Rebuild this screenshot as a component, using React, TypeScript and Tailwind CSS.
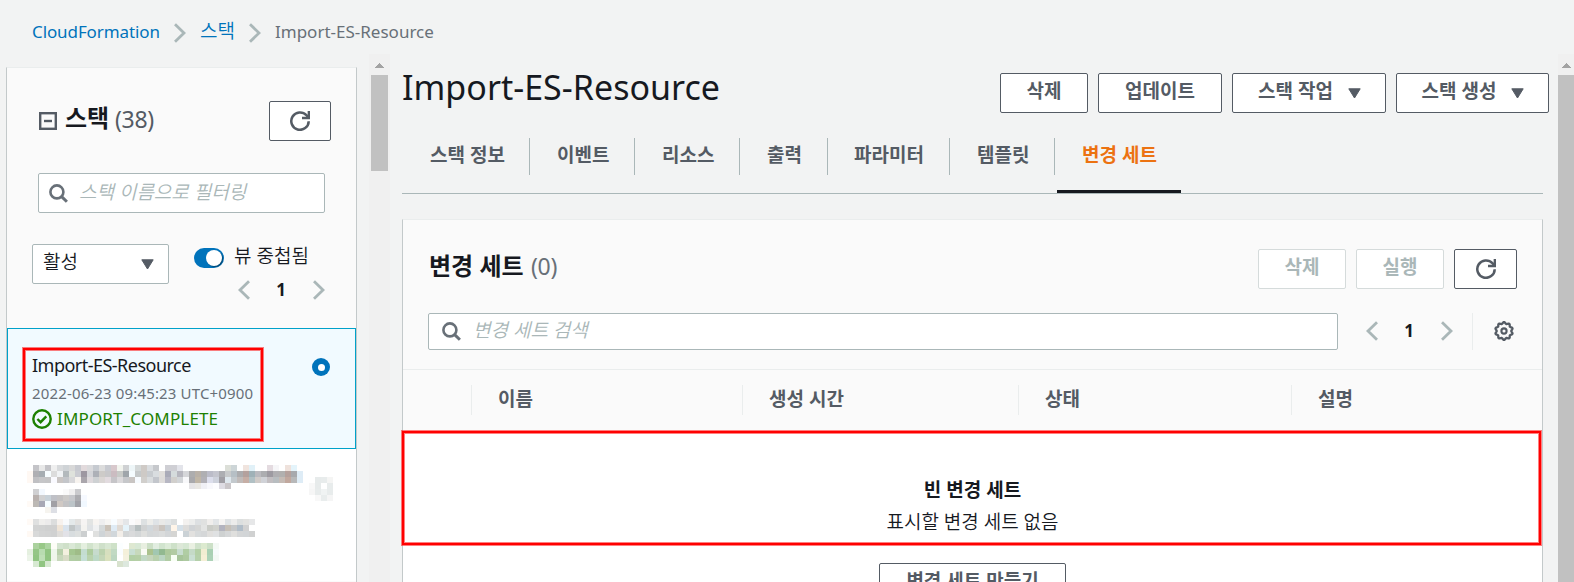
import React from 'react';

const MOSAIC_CELL = 6;

// One entry per mosaic row: the row, the column where a run starts, then its cell colours.
const MOSAIC: [number, number, string][] = [
  [0, 1, 'c4c4c8 e8e8e8 c4c4c8 efefef d8dadc cfd3d6 d8d8d8 c8cad0 e2dadc dadadc c6cad0 dcdcdc c8cad0 d8c8cc f2f4ee cfd1d3 eef6f8 d4d8d8 cfcac6 dadde0 c6c8cc ffffff cfcfd4 cfcfd4 e3e4ea'],
  [0, 33, 'dcdfd8 cdd5d7 ffffff f0e4de e1f1f8 ffffff ffffff e4dbe0 f6f6f8 ffffff efe2dc e4f4fb'],
  [1, 0, 'fff8f3 afafb3 a6adb2 f7fdff dcdcdc f0f2f4 b3b9bc dfe2dc cbccd2 9d97a1 d3d4d8 adb0b7 cdcbc8 c8c8ca cbbcc1 c8cac7 9fa5aa f5fcff c5c9ca cecac6 c8ccd0 d9dde0 e0dedb aaabb8 d5dbdc b7b7bf d5d6d9 adadae b9b1a7 afafb2 bbbcc8 c4c5ce adaeb2 c8cacb b6bfc5 acacae b4a19d 9fb1b7 bababf acadb0 9d9aa1 b0afb2 b1b0af b5a19c a7a9ad deecf6'],
  [2, 0, 'fff8f3 c0c0c3 c6c6c8 c5c5c6 fafaff cac6c4 c4c6ca d8d8da f7f3ef aaa6ac ded9dc ced1d3 dad6d4 e2dbdf c6c5c8 dbd9db c6c7ca c9c5c3 f7fbff d1cfcc d9dcde c3c6cc dedcda b7b7c3 d1cfcc d2d5d8 f8f8fa a9a9ac c0b6a6 b2b1b7 dcdeec ced2dc a19fa5 dfe8ee c3c9cd c1bbb9 c6aea5 b1c0c4 d0cbc8 d0d2d7 c2bec1 b8bdc0 c5bbb5 c1a89e b7b8b9 deecf6'],
  [3, 27, 'e5e4e6 e9e7e3 f0f0f5 f8f8fc fdfdff dedce3 cac6c9'],
  [4, 1, 'd0d0d2 f3f8fe ffffff ffffff ffffff fafafa f0efef cacacd'],
  [5, 1, 'b9b1ae d1d1d2 c8d1d8 bfc0c6 c3c1c2 cccac8 c6c7cb acacb0 f6f9ff'],
  [6, 0, 'fffaf6 bcb8b4 a7a8b5 f5fcff a1a0a5 d0c9c4 c3c3c5 bcc4c8 a2a3a9 f1f8ff'],
  [7, 3, 'f6f4ef dddfe5'],
  [9, 0, 'fffaf6 dfe0e0 f0efed ecebeb dcdddd f6f1ed f8fafc e4e9ea e2e1df f6f4f3 e2e4e3 f7f4f1 eeeeef f6f5f3 f8fcff f2efed e4e6e8 fbfbfc f8f6f5 dde1e2 ededea dfe3e6 e9e9e7 e4e7e8 dcdfdf ffffff f3f1ef ecedec dde0e2 e0e1e0 f0eeec e2e5e7 f5f4f2 dfe3e5 ececeb dcdfdf e2e2e0 e6e7e8'],
  [10, 1, 'd2d3d3 d1d2d2 cfd0d0 d0d0d0 efe4d7 d9e3ed c1c6c7 d1d6da f4f3f0 dfe2e5 f0f1f2 d5d9da cbc3b9 dfebf5 e0dad4 e5f3fa d2d5d7 b7bfc0 d0d2d2 d1d7db d5d3d2 cbc5bf c8d0d5 fff5e9 d5e0e8 dddcda d0d3d6 d5d6d5 e3e4e3 caccc7 d0d1cc b3b4bf c6c0b7 c5c7c8 b1bdc8 d1d1d1'],
  [11, 0, 'fff9f4 d8d9d9 d3d4d4 d2d3d3 d0d1d1 dfddda e2e2e7 d8dddf dde0df cccfd0 ffffff dfe0df cfd4d7 d9d7d5 d1d7db f2eee9 d3d6d7 d9dadb d3d6d7 dedfdd d4d7d8 d6d8d9 dadcdc d3d6d8 d5d5d3 ffffff cbd2d6 e2e1df d7dadb d5d7d8 e0dfdd dfe1e2 ced1d1 d5d7d8 dfdfdd d4d6d7 d2d5d7 d0d1d1'],
  [13, 1, 'abd19e 98c888 acd4a1 fdfdf7 d4e4d0 cfe0c9 dae8d6 cfe3ca e4efdf d1e3cc dfebd9 cfe0ca d8e7d3 cee1c8 fbfeff ffffff dee8d1 d8e8d5 e8efe0 ccdfc6 e1ede0 d1e4ce dcebd8 cee1c9 dde8d8 d6e7d3 eaf0e2 d0e2cb dceacf cce0c7 f4f9f5'],
  [14, 0, 'e5f0e0 95c686 b8dcb0 91c582 eef6eb b8cfab f3f0df a4c690 9fbc88 c4ddd0 aecc9f c7dbcd bcd2ae d7dfbf c1d9c3 fafdff f4f0da c9dfd3 c7d9bc fafbf5 abc28e a2c7b1 92b990 adc99c b2cba3 c8ddd0 b0cda4 c5dac7 b4d0a7 f1edd2 a9d0b3 f7fbfb'],
  [15, 0, 'ecf4e9 91c582 bedfb6 91c582 eff5eb c7d8bb d9dcc7 b1cda4 b0cca2 c5dfd6 b9d2ad bdd9c7 c4d6b7 dae1bd bcd6c1 ffffff f4f1df b2cfa5 b5cfa6 c2d9c6 c5d5bb b8d0ad bad5c2 b1cca4 f8fff5 a6c49a adc9a0 cadfd3 b5d0aa f5efd6 acd2b7 f4f9f5'],
  [16, 1, 'd7e9d2 91c582 d6e8d0'],
  [16, 15, 'd8e2ce dde8de'],
  [2, 48, 'e7ebeb e8ecec f5f5f4'],
  [3, 47, 'f8f8f8 e7ebeb ffffff e8ecec'],
  [4, 47, 'f6f6f6 e8ecec f0f3f3 e8ecec'],
  [5, 48, 'f8f8f8 e9eded f5f5f5'],
];

function RedactedStack() {
  return (
    <svg width="306" height="102" shapeRendering="crispEdges" aria-hidden="true">
      {MOSAIC.flatMap(([row, start, colours]) =>
        colours.split(' ').map((c, i) => (
          <rect
            key={`${row}-${start + i}`}
            x={(start + i) * MOSAIC_CELL}
            y={row * MOSAIC_CELL}
            width={MOSAIC_CELL}
            height={MOSAIC_CELL}
            fill={`#${c}`}
          />
        )),
      )}
    </svg>
  );
}

function Chevron({ left = false, className = '' }: { left?: boolean; className?: string }) {
  return (
    <svg width="12" height="20" viewBox="0 0 12 20" fill="none" className={`shrink-0 ${className}`}>
      <path d={left ? 'M11 1.2L2 10l9 8.8' : 'M1 1.2L10 10l-9 8.8'} stroke="#aab7b8" strokeWidth="2.8" />
    </svg>
  );
}

function Refresh() {
  return (
    <svg width="20" height="20" viewBox="0 0 20 20" fill="none" stroke="#545b64" strokeWidth="2.5">
      <path d="M18.7 10.2A8.7 8.7 0 1 1 16.4 4.2L18.4 6.4" />
      <path d="M18.9 0v6.9H12" />
    </svg>
  );
}

function Search() {
  return (
    <svg width="19" height="19" viewBox="0 0 19 19" fill="none" stroke="#687078" className="shrink-0">
      <circle cx="7.9" cy="7.9" r="6.5" strokeWidth="2.6" />
      <path d="M12.6 12.6l5.3 5.2" strokeWidth="3" />
    </svg>
  );
}

function Caret() {
  return (
    <svg width="13" height="11" viewBox="0 0 13 11" className="shrink-0">
      <path d="M.8.8h11.4L6.5 10z" fill="#545b64" stroke="#545b64" strokeLinejoin="round" />
    </svg>
  );
}

function Gear() {
  const teeth = 10;
  const points: string[] = [];
  for (let i = 0; i <= 120; i++) {
    const a = (i / 120) * Math.PI * 2;
    const r = 8.1 + 0.8 * Math.cos(a * teeth);
    points.push(`${(10 + r * Math.sin(a)).toFixed(2)},${(10 - r * Math.cos(a)).toFixed(2)}`);
  }
  return (
    <svg width="20" height="20" viewBox="0 0 20 20" fill="none" stroke="#545b64" strokeWidth="2.3">
      <polygon points={points.join(' ')} strokeLinejoin="round" />
      <circle cx="10" cy="10" r="2.6" strokeWidth="2.1" />
    </svg>
  );
}

function ScrollArrow() {
  return (
    <svg width="9" height="5" viewBox="0 0 9 5" shapeRendering="crispEdges">
      <path d="M4.5 0L9 5H0z" fill="#a3a3a3" />
    </svg>
  );
}

function Highlight({ className }: { className: string }) {
  return (
    <div
      className={`absolute border-2 border-[#ff0000] shadow-[0_0_0_1px_rgba(255,0,0,0.5),inset_0_0_0_1px_rgba(255,0,0,0.5)] ${className}`}
    />
  );
}

function Button({ label, className, caret = false, disabled = false }: { label: string; className: string; caret?: boolean; disabled?: boolean }) {
  return (
    <button
      className={`flex h-10 shrink-0 items-start justify-center rounded-[2px] border bg-white pt-[4px] text-[19px] leading-[26px] font-bold ${
        disabled ? 'border-[#d5dbdb] text-[#aab7b8]' : 'border-[#545b64] text-[#545b64]'
      } ${className}`}
    >
      {label}
      {caret && (
        <span className="mt-[10px] mr-[-1px] ml-[15px]">
          <Caret />
        </span>
      )}
    </button>
  );
}

const TABS = [
  { label: '스택 정보', width: 'w-[128px] pl-[28px]' },
  { label: '이벤트', width: 'w-[105px] pl-[27px]' },
  { label: '리소스', width: 'w-[105px] pl-[27px]' },
  { label: '출력', width: 'w-[88px] pl-[27px]' },
  { label: '파라미터', width: 'w-[122px] pl-[26px]' },
  { label: '템플릿', width: 'w-[105px] pl-[27px]' },
];

const COLUMNS = [
  { label: '이름', width: 'w-[271px]' },
  { label: '생성 시간', width: 'w-[276px]' },
  { label: '상태', width: 'w-[273px]' },
  { label: '설명', width: 'w-[250px]' },
];

function StackList() {
  return (
    <aside className="mt-[13px] ml-[6px] h-[515px] w-[351px] shrink-0 border-x border-t border-x-[#c3c9ca] border-t-[#eaeded] bg-[#fafafa]">
      <div className="flex h-[73px] items-start pl-[32px]">
        <svg width="18" height="18" viewBox="0 0 18 18" fill="none" stroke="#545b64" className="mt-[44px]">
          <rect x="1.2" y="1.2" width="15.6" height="15.6" strokeWidth="2.4" />
          <path d="M5 9h8" strokeWidth="2.4" />
        </svg>
        <h2 className="mt-[32px] ml-[8px] w-[50px] text-[24px] leading-[36px] font-bold">스택</h2>
        <span className="mt-[33px] w-[154px] text-[23px] leading-[36px] tracking-[-0.3px] text-[#545b64]">(38)</span>
        <button className="mt-[33px] flex h-10 w-[62px] items-center justify-center rounded-[2px] border border-[#545b64] bg-white">
          <Refresh />
        </button>
      </div>
      <div className="mt-[32px] ml-[31px] flex h-10 w-[287px] items-start rounded-[2px] border border-[#aab7b8] bg-white pl-[10px]">
        <span className="mt-[10px]"><Search /></span>
        <span className="mt-[5px] ml-[11px] text-[19px] leading-[26px] font-[350] text-[#aab7b8] italic">스택 이름으로 필터링</span>
      </div>
      <div className="mt-[31px] flex h-[84px] pl-[25px]">
        <div className="flex h-10 w-[137px] items-start justify-between rounded-[2px] border border-[#aab7b8] bg-white pr-[14px] pl-[10px]">
          <span className="mt-[4px] text-[19px] leading-[26px] font-[350]">활성</span>
          <span className="mt-[14px]"><Caret /></span>
        </div>
        <div className="ml-[25px] w-[140px]">
          <div className="flex h-[36px]">
            <span className="mt-[4px] flex h-5 w-[30px] items-center justify-end rounded-full bg-[#0073bb] pr-[2px]">
              <span className="size-4 rounded-full bg-white shadow-[1px_1px_1px_rgba(0,0,0,0.4)]" />
            </span>
            <span className="ml-[10px] text-[19px] leading-[24px] font-[350]">뷰 중첩됨</span>
          </div>
          <div className="flex items-center pl-[44px]">
            <Chevron left />
            <span className="w-[62px] text-center text-[17px] leading-5 font-bold">1</span>
            <Chevron className="ml-px" />
          </div>
        </div>
      </div>
      <div className="relative flex h-[121px] justify-between border border-[#00a1c9] bg-[#f1faff] pr-[25px] pl-[24px]">
        <div className="pt-[23px]">
          <div className="text-[18px] leading-[26px] tracking-[-0.52px]">Import-ES-Resource</div>
          <div className="mt-[2px] text-[15px] leading-[26px] tracking-[0.15px] text-[#687078]">2022-06-23 09:45:23 UTC+0900</div>
          <div className="mt-px flex items-center text-[#1d8102]">
            <svg width="20" height="20" viewBox="0 0 20 20" fill="none" stroke="currentColor" strokeWidth="2.4">
              <circle cx="10" cy="10" r="8.7" />
              <path d="M5.4 10l3.2 3.2 5.7-5.8" />
            </svg>
            <span className="ml-[5px] text-[17px] leading-[24px] tracking-[0.15px]">IMPORT_COMPLETE</span>
          </div>
        </div>
        <span className="mt-[29px] flex size-[18px] items-center justify-center rounded-full bg-[#0073bb]">
          <span className="size-[7px] rounded-full bg-white" />
        </span>
        <Highlight className="top-[19px] left-[15px] h-[93px] w-[240px]" />
      </div>
      <div className="h-[132px] bg-white pt-[16px] pl-[20px]">
        <RedactedStack />
      </div>
    </aside>
  );
}

function ChangeSets() {
  return (
    <section className="relative mt-[25px] h-[363px] w-[1141px] border-x border-t border-x-[#c3c9ca] border-t-[#eaeded] bg-white">
      <div className="h-[150px] border-b border-[#eaeded] bg-[#fafafa] pt-[29px] pl-[25px]">
        <div className="flex h-[64px] pr-[25px]">
          <h2 className="w-[103px] pl-px text-[24px] leading-[34px] font-bold">변경 세트</h2>
          <span className="text-[23px] leading-[34px] tracking-[-0.3px] text-[#687078]">(0)</span>
          <div className="ml-auto flex gap-[10px]">
            <Button label="삭제" className="w-[88px]" disabled />
            <Button label="실행" className="w-[88px]" disabled />
            <button className="flex h-10 w-[63px] items-center justify-center rounded-[2px] border border-[#545b64] bg-white">
              <Refresh />
            </button>
          </div>
        </div>
        <div className="flex h-[37px] items-start">
          <div className="flex h-[37px] w-[910px] items-start rounded-[2px] border border-[#aab7b8] bg-white pl-[13px]">
            <span className="mt-[8px]"><Search /></span>
            <span className="mt-[3px] ml-[12px] text-[19px] leading-[26px] font-[350] text-[#aab7b8] italic">변경 세트 검색</span>
          </div>
          <div className="flex items-center pt-[8px]">
            <Chevron left className="ml-[28px]" />
            <span className="w-[62px] text-center text-[17px] leading-5 font-bold">1</span>
            <Chevron className="ml-px" />
          </div>
          <span className="mr-[21px] ml-[19px] h-[37px] w-px bg-[#eaeded]" />
          <div className="pt-[8px]">
            <Gear />
          </div>
        </div>
      </div>
      <div className="flex h-[61px] bg-[#fafafa] pt-[15px] pl-[68px]">
        {COLUMNS.map((c) => (
          <div key={c.label} className={`h-[30px] border-l border-[#eaeded] pl-[26px] text-[19px] leading-[29px] font-bold text-[#545b64] ${c.width}`}>
            {c.label}
          </div>
        ))}
      </div>
      <div className="flex flex-col items-center pt-[45px] text-[19px]">
        <div className="leading-[28px] font-bold">빈 변경 세트</div>
        <div className="mt-[4px] leading-[28px] font-[350]">표시할 변경 세트 없음</div>
        <div className="mt-[27px]">
          <Button label="변경 세트 만들기" className="w-[187px]" />
        </div>
      </div>
      <Highlight className="top-[211px] -left-px h-[114px] w-[1139px]" />
    </section>
  );
}

export default function App() {
  return (
    <div className="flex h-[582px] w-[1574px] flex-col overflow-hidden bg-[#f2f3f3] font-['Noto_Sans','Noto_Sans_CJK_KR',sans-serif] text-[#16191f]">
      <nav className="flex h-[54px] items-start pt-[19px] pl-[32px] text-[17px] leading-[26px] whitespace-nowrap">
        <a className="w-[142px] tracking-[-0.1px] text-[#0073bb]">CloudFormation</a>
        <Chevron className="mt-[4px]" />
        <a className="-mt-px ml-[14px] w-[34px] text-[19px] font-[350] text-[#0073bb]">스택</a>
        <Chevron className="mt-[4px] ml-[15px]" />
        <span className="ml-[14px] text-[#687078]">Import-ES-Resource</span>
      </nav>
      <div className="flex h-[528px]">
        <StackList />
        <div className="ml-[12px] flex w-[21px] shrink-0 flex-col items-center bg-[#f0f0f0] pt-[9px]">
          <ScrollArrow />
          <div className="mt-[7px] h-[96px] w-[17px] bg-[#c1c1c1]" />
        </div>
        <main className="w-[1168px] shrink-0 pl-[12px]">
          <div className="flex h-[84px] items-start gap-[10px] pt-[19px]">
            <h1 className="-mt-[8px] w-[588px] text-[34px] leading-[45px] tracking-[0.02px] whitespace-nowrap">Import-ES-Resource</h1>
            <Button label="삭제" className="w-[88px]" />
            <Button label="업데이트" className="w-[124px]" />
            <Button label="스택 작업" className="w-[154px]" caret />
            <Button label="스택 생성" className="w-[153px]" caret />
          </div>
          <div className="flex h-[56px] w-[1141px] border-b border-[#aab7b8] text-[19px] leading-[34px] font-bold text-[#545b64]">
            {TABS.map((t) => (
              <div key={t.label} className={`h-[37px] border-r border-[#aab7b8] ${t.width}`}>
                {t.label}
              </div>
            ))}
            <div className="ml-[2px] h-[55px] w-[124px] border-b-[3px] border-[#16191f] pl-[25px] text-[#ec7211]">변경 세트</div>
          </div>
          <ChangeSets />
        </main>
        <div className="flex w-[16px] shrink-0 flex-col items-center bg-[#f0f0f0] pt-[9px]">
          <ScrollArrow />
          <div className="mt-[7px] h-[507px] w-full bg-[#c1c1c1]" />
        </div>
      </div>
    </div>
  );
}
